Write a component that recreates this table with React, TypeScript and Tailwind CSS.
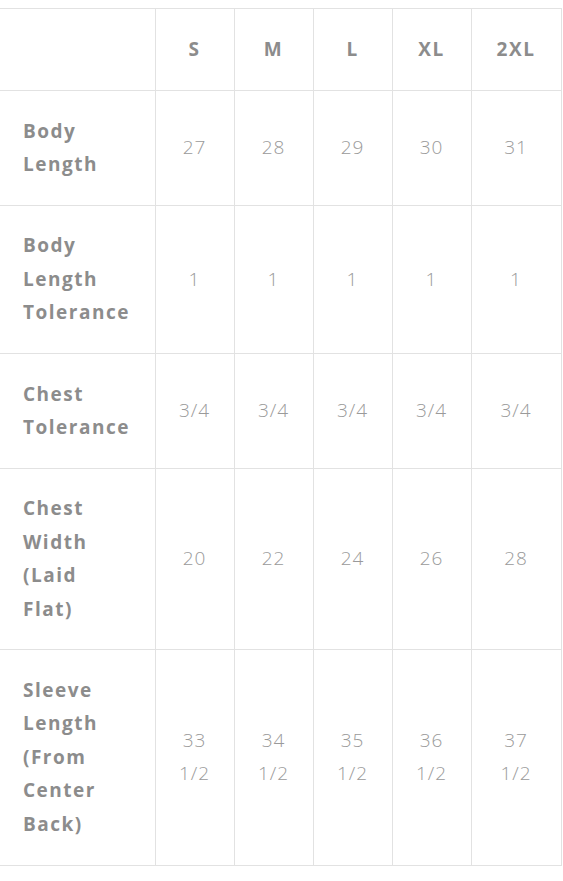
import React from 'react';

type Row = { label: string[]; values: string[][] };

const sizes = ['S', 'M', 'L', 'XL', '2XL'];

const rows: Row[] = [
  { label: ['Body', 'Length'], values: [['27'], ['28'], ['29'], ['30'], ['31']] },
  { label: ['Body', 'Length', 'Tolerance'], values: [['1'], ['1'], ['1'], ['1'], ['1']] },
  { label: ['Chest', 'Tolerance'], values: [['3/4'], ['3/4'], ['3/4'], ['3/4'], ['3/4']] },
  { label: ['Chest', 'Width', '(Laid', 'Flat)'], values: [['20'], ['22'], ['24'], ['26'], ['28']] },
  {
    label: ['Sleeve', 'Length', '(From', 'Center', 'Back)'],
    values: [
      ['33', '1/2'],
      ['34', '1/2'],
      ['35', '1/2'],
      ['36', '1/2'],
      ['37', '1/2'],
    ],
  },
];

const widths = ['w-[155px]', 'w-[79px]', 'w-[79px]', 'w-[79px]', 'w-[79px]', 'w-[90px]'];

export default function App() {
  return (
    <div
      className="bg-white min-h-[881px] pt-2"
      style={{ fontFamily: '"Open Sans", "Noto Sans", sans-serif' }}
    >
      <table className="border-collapse table-fixed w-[561px] text-[19px] leading-[33.4px]">
        <colgroup>
          {widths.map((w, i) => (
            <col key={i} className={w} />
          ))}
        </colgroup>
        <thead>
          <tr className="h-[82px]">
            <th className="border-t border-[#e2e2e2]" />
            {sizes.map((s, i) => (
              <th
                key={s}
                className={`border-t border-l border-[#e2e2e2] text-center font-bold tracking-[1.5px] text-[#8c8c8c] ${
                  i === sizes.length - 1 ? 'border-r' : ''
                }`}
              >
                {s}
              </th>
            ))}
          </tr>
        </thead>
        <tbody>
          {rows.map((row, r) => (
            <tr key={r}>
              <td
                className={`border-t border-[#e2e2e2] pl-[23px] pr-1 py-[23.5px] font-bold tracking-[1.5px] text-[#8c8c8c] ${
                  r === rows.length - 1 ? 'border-b' : ''
                }`}
              >
                {row.label.map((l, i) => (
                  <div key={i}>{l}</div>
                ))}
              </td>
              {row.values.map((v, i) => (
                <td
                  key={i}
                  className={`border-t border-l border-[#e2e2e2] text-center font-light tracking-[1px] text-[#9a9a9a] ${
                    i === row.values.length - 1 ? 'border-r' : ''
                  } ${r === rows.length - 1 ? 'border-b' : ''}`}
                >
                  {v.map((t, j) => (
                    <div key={j}>{t}</div>
                  ))}
                </td>
              ))}
            </tr>
          ))}
        </tbody>
      </table>
    </div>
  );
}
